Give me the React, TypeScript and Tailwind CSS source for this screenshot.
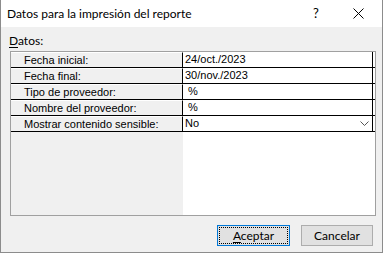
import React from 'react';

const rows = [
  { label: 'Fecha inicial:', value: '24/oct./2023' },
  { label: 'Fecha final:', value: '30/nov./2023' },
  { label: 'Tipo de proveedor:', value: ' %' },
  { label: 'Nombre del proveedor:', value: ' %' },
  { label: 'Mostrar contenido sensible:', value: 'No', combo: true },
];

export default function App() {
  return (
    <div className="w-[383px] h-[253px] bg-[#f0f0f0] border-x border-b border-[#8c8c8c] flex flex-col font-['Liberation_Sans',sans-serif] text-black overflow-hidden">
      {/* Title bar */}
      <div className="h-[27px] bg-white flex items-center pl-[6px] shrink-0">
        <span className="text-[12px] font-['Lato',sans-serif] flex-1">Datos para la impresión del reporte</span>
        <span className="text-[13px] w-[20px] text-center mr-[27px] font-['Lato',sans-serif]">?</span>
        <svg width="11" height="11" viewBox="0 0 11 11" className="mr-[18px]">
          <path d="M0.5 0.5 L10.5 10.5 M10.5 0.5 L0.5 10.5" stroke="#000" strokeWidth="1" />
        </svg>
      </div>

      {/* Body */}
      <div className="flex-1 flex flex-col px-[9px]">
        <div className="text-[12px] font-['Lato',sans-serif] mt-[5px] h-[19px] -ml-[1px]">
          <span className="underline underline-offset-2">D</span>atos:
        </div>

        <div className="h-[165px] border border-[#a0a0a0] bg-white flex flex-col w-[366px]">
          <div className="flex flex-col">
            {rows.map((r, i) => (
              <div key={i} className="flex h-[16px] border-b border-[#000] text-[11px] leading-[15px]">
                <div className="w-[172px] bg-[#f0f0f0] border-r border-[#000] pl-[13px] border-t border-t-white">
                  {r.label}
                </div>
                <div className="flex-1 flex items-center pl-[2px] border-r border-[#000] mr-[2px]">
                  <span className="flex-1 whitespace-pre">{r.value}</span>
                  {r.combo && (
                    <svg width="9" height="6" viewBox="0 0 9 6" className="mr-[3px]">
                      <path d="M0.5 0.5 L4.5 4.5 L8.5 0.5" stroke="#555" fill="none" strokeWidth="1" />
                    </svg>
                  )}
                </div>
              </div>
            ))}
          </div>
          <div className="flex flex-1">
            <div className="w-[172px] bg-[#f0f0f0]" />
            <div className="flex-1 bg-white" />
          </div>
        </div>

        <div className="flex justify-end mt-[9px] gap-[11px]">
          <button className="w-[73px] h-[21px] bg-[#e1e1e1] border border-[#0078d7] text-[12px] font-['Lato',sans-serif] flex items-center justify-center p-[1px]">
            <span className="w-full h-full border border-dotted border-[#000] flex items-center justify-center leading-none">
              <span><span className="underline underline-offset-2">A</span>ceptar</span>
            </span>
          </button>
          <button className="w-[72px] h-[21px] bg-[#e1e1e1] border border-[#adadad] text-[12px] font-['Lato',sans-serif] flex items-center justify-center leading-none">
            Cancelar
          </button>
        </div>
      </div>
    </div>
  );
}
